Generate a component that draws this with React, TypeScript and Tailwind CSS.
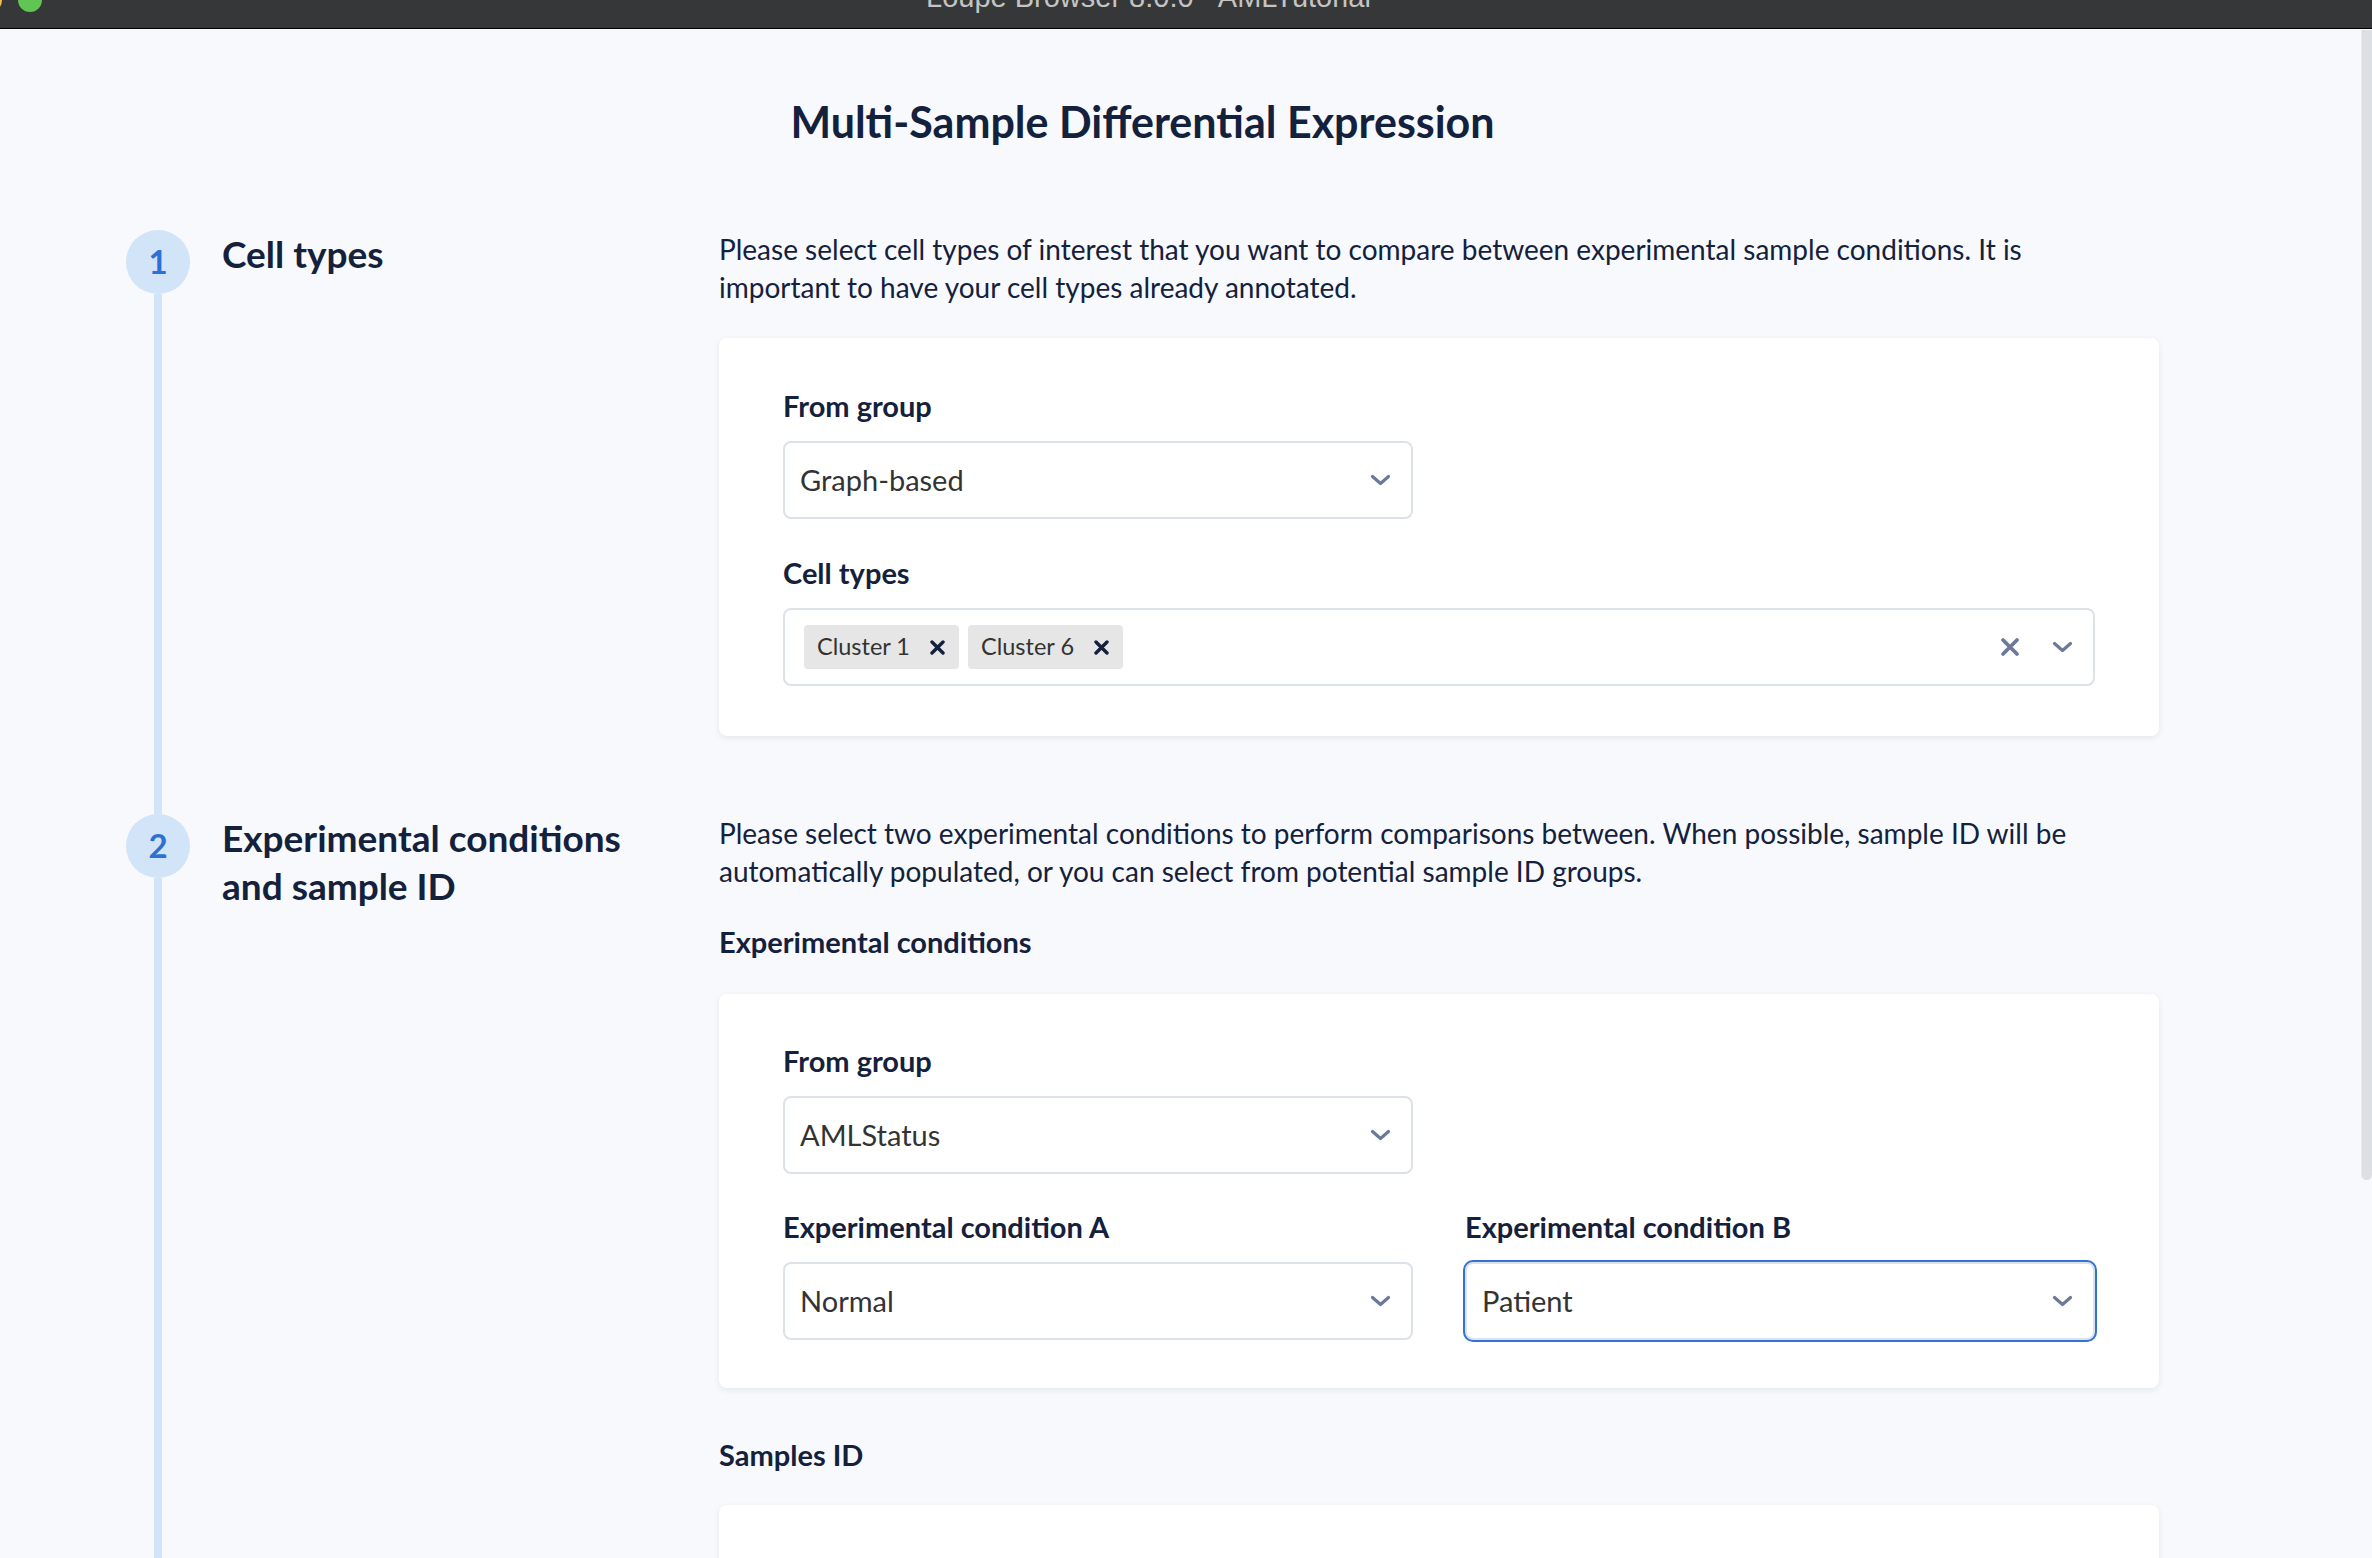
import React from 'react';

const Chevron = () => (
  <svg width="21" height="12" viewBox="0 0 21 12" fill="none">
    <path d="M2.5 2.5 L10.5 9.5 L18.5 2.5" stroke="#6b7a99" strokeWidth="3.2" strokeLinecap="round" strokeLinejoin="round" />
  </svg>
);

const ClearX = () => (
  <svg width="20" height="20" viewBox="0 0 20 20" fill="none">
    <path d="M3 3 L17 17 M17 3 L3 17" stroke="#6b7a99" strokeWidth="3.8" strokeLinecap="round" />
  </svg>
);

const ChipX = () => (
  <svg width="15" height="15" viewBox="0 0 15 15" fill="none">
    <path d="M2 2 L13 13 M13 2 L2 13" stroke="#14213d" strokeWidth="3.4" strokeLinecap="round" />
  </svg>
);

function Select({ value, focused }: { value: string; focused?: boolean }) {
  return (
    <div
      className={`h-[78px] rounded-[8px] border-2 border-[#dde2e8] bg-white flex items-center pl-[15px] pr-[20px] ${
        focused ? 'ring-2 ring-[#3172d6]' : ''
      }`}
    >
      <span className="flex-1 text-[29px] text-[#333333]">{value}</span>
      <Chevron />
    </div>
  );
}

function Chip({ label }: { label: string }) {
  return (
    <div className="h-[44px] rounded-[4px] bg-[#e6e6e6] flex items-center pl-[13px] pr-[14px] gap-[20px]">
      <span className="text-[23.5px] text-[#333333]">{label}</span>
      <ChipX />
    </div>
  );
}

function Field({ label, children }: { label: string; children: React.ReactNode }) {
  return (
    <div>
      <div className="text-[29px] leading-[32px] font-bold mb-[19px]">{label}</div>
      {children}
    </div>
  );
}

function Card({ children, className = '' }: { children?: React.ReactNode; className?: string }) {
  return (
    <div className={`rounded-[8px] bg-white shadow-[0_2px_6px_rgba(16,24,40,0.08)] px-[64px] ${className}`}>
      {children}
    </div>
  );
}

function Step({ n, title, children }: { n: number; title: React.ReactNode; children: React.ReactNode }) {
  return (
    <div className="flex">
      <div className="w-[593px] shrink-0 flex gap-[32px]">
        <div className="flex flex-col items-center w-[64px] shrink-0">
          <div className="w-[64px] h-[64px] rounded-full bg-[#d2e4f7] flex items-center justify-center text-[33px] font-bold text-[#2f6fd6]">
            {n}
          </div>
          <div className="flex-1 w-[8px] bg-[#d2e4f7]" />
        </div>
        <h2 className="text-[37px] leading-[48px] font-bold">{title}</h2>
      </div>
      <div className="flex-1 pb-[78px]">{children}</div>
    </div>
  );
}

export default function App() {
  return (
    <div className="relative h-[1558px] overflow-hidden bg-[#f7f9fc] font-['Lato',sans-serif] text-[#14213d]">
      {/* window title bar, mostly cut off */}
      <div className="h-[29px] bg-[#363739] border-b border-black overflow-hidden relative">
        <div className="absolute left-[-22px] top-[-12px] w-[24px] h-[24px] rounded-full bg-[#f4bf4f]" />
        <div className="absolute left-[18px] top-[-12px] w-[24px] h-[24px] rounded-full bg-[#61c554]" />
        <div className="pl-[926px] -mt-[19px] text-[29px] leading-[32px] text-[#c4c4c4] font-['Liberation_Sans',sans-serif]">
          Loupe Browser 8.0.0 - AMLTutorial
        </div>
      </div>

      <main className="pl-[126px] w-[2159px]">
        <h1 className="mt-[69px] text-center text-[43px] leading-[48px] font-bold">
          Multi-Sample Differential Expression
        </h1>

        <div className="mt-[84px]">
          <Step n={1} title="Cell types">
            <p className="text-[28px] leading-[38px]">
              Please select cell types of interest that you want to compare between experimental sample conditions. It is
              <br />
              important to have your cell types already annotated.
            </p>
            <Card className="mt-[32px] pt-[52px] pb-[50px]">
              <div className="grid grid-cols-2 gap-x-[52px]">
                <Field label="From group">
                  <Select value="Graph-based" />
                </Field>
              </div>
              <div className="mt-[38px]">
                <Field label="Cell types">
                  <div className="h-[78px] rounded-[8px] border-2 border-[#dde2e8] bg-white flex items-center pl-[19px] pr-[20px]">
                    <div className="flex-1 flex gap-[9px]">
                      <Chip label="Cluster 1" />
                      <Chip label="Cluster 6" />
                    </div>
                    <div className="flex items-center gap-[32px]">
                      <ClearX />
                      <Chevron />
                    </div>
                  </div>
                </Field>
              </div>
            </Card>
          </Step>

          <Step
            n={2}
            title={
              <>
                Experimental conditions
                <br />
                and sample ID
              </>
            }
          >
            <p className="text-[28px] leading-[38px]">
              Please select two experimental conditions to perform comparisons between. When possible, sample ID will be
              <br />
              automatically populated, or you can select from potential sample ID groups.
            </p>
            <div className="mt-[36px] text-[29px] leading-[32px] font-bold">Experimental conditions</div>
            <Card className="mt-[36px] pt-[51px] pb-[48px]">
              <div className="grid grid-cols-2 gap-x-[52px]">
                <Field label="From group">
                  <Select value="AMLStatus" />
                </Field>
              </div>
              <div className="mt-[37px] grid grid-cols-2 gap-x-[52px]">
                <Field label="Experimental condition A">
                  <Select value="Normal" />
                </Field>
                <Field label="Experimental condition B">
                  <Select value="Patient" focused />
                </Field>
              </div>
            </Card>
            <div className="mt-[51px] text-[29px] leading-[32px] font-bold">Samples ID</div>
            <Card className="mt-[34px] h-[320px]" />
          </Step>
        </div>
      </main>

      {/* scrollbar */}
      <div className="absolute right-0 top-[30px] w-[11px] h-[1150px] bg-[#dcdfe4] border-l border-[#e8eaee] rounded-b-[6px]" />
    </div>
  );
}
